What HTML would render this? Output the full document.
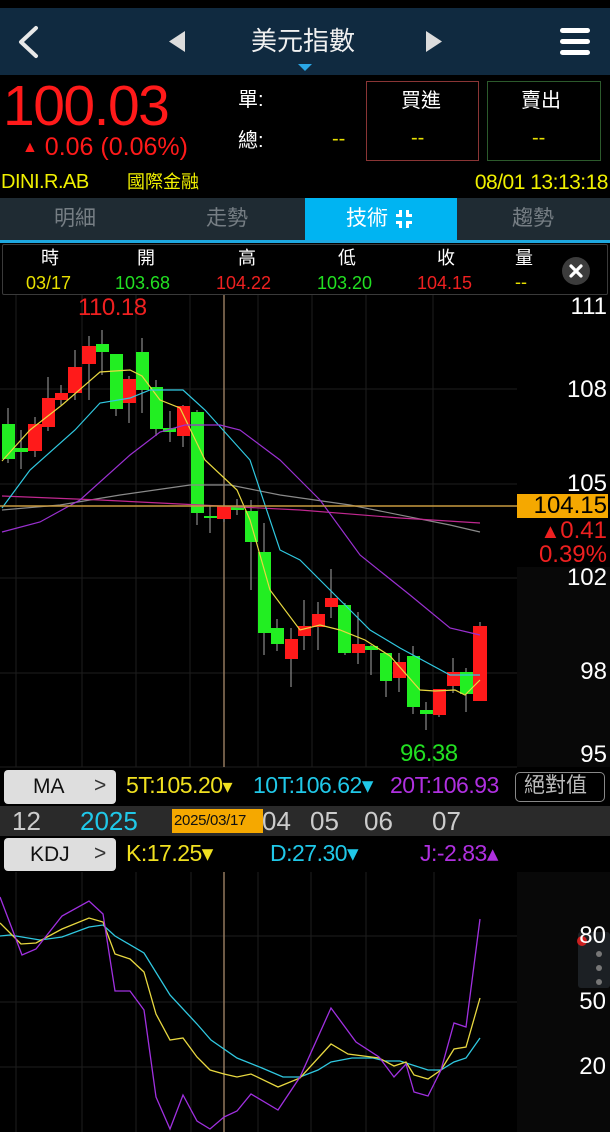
<!DOCTYPE html>
<html><head><meta charset="utf-8">
<style>
html,body{margin:0;padding:0;background:#000;}
body{width:610px;height:1132px;position:relative;overflow:hidden;font-family:"Liberation Sans","Noto Sans CJK TC",sans-serif;}
.a{position:absolute;white-space:nowrap;line-height:1;}
</style></head><body>
<!-- nav -->
<div class="a" style="left:0;top:8px;width:610px;height:67px;background:#102a40;"></div>
<svg class="a" style="left:0;top:0" width="610" height="80">
<polyline points="36,28 21,42 36,56" fill="none" stroke="#e8e8e8" stroke-width="4" stroke-linecap="round" stroke-linejoin="round"/>
<polygon points="185,31 185,52 169,41.5" fill="#dcdcdc"/>
<polygon points="426,31 426,52 442,41.5" fill="#dcdcdc"/>
<rect x="560" y="28" width="30" height="5" rx="2.5" fill="#fff"/>
<rect x="560" y="39" width="30" height="5" rx="2.5" fill="#fff"/>
<rect x="560" y="50" width="30" height="5" rx="2.5" fill="#fff"/>
<polygon points="298,64 312,64 305,71" fill="#2aa8e8"/>
</svg>
<div class="a" style="left:251px;top:28px;font-size:26px;color:#f0f0f0;">美元指數</div>
<!-- quote -->
<div class="a" style="left:3px;top:78px;font-size:57px;color:#ff1a1a;letter-spacing:-1.5px;">100.03</div>
<div class="a" style="left:22px;top:135px;font-size:25px;color:#ff1a1a;"><span style="font-size:16px;vertical-align:3px">▲</span> 0.06 (0.06%)</div>
<div class="a" style="left:238px;top:90px;font-size:20px;color:#fff;">單:</div>
<div class="a" style="left:238px;top:131px;font-size:20px;color:#fff;">總:</div>
<div class="a" style="left:332px;top:129px;font-size:20px;color:#e8e000;">--</div>
<div class="a" style="left:366px;top:81px;width:111px;height:78px;border:1px solid #8a3535;"></div>
<div class="a" style="left:487px;top:81px;width:112px;height:78px;border:1px solid #2c5a2c;"></div>
<div class="a" style="left:401px;top:91px;font-size:20px;color:#fff;">買進</div>
<div class="a" style="left:521px;top:91px;font-size:20px;color:#fff;">賣出</div>
<div class="a" style="left:411px;top:128px;font-size:20px;color:#e8e000;">--</div>
<div class="a" style="left:532px;top:128px;font-size:20px;color:#e8e000;">--</div>
<div class="a" style="left:1px;top:172px;font-size:20px;color:#f0f000;letter-spacing:-0.5px;">DINI.R.AB</div>
<div class="a" style="left:127px;top:173px;font-size:18px;color:#f0f000;">國際金融</div>
<div class="a" style="right:2px;top:172px;font-size:21px;color:#f0f000;letter-spacing:-0.5px;">08/01 13:13:18</div>
<!-- tabs -->
<div class="a" style="left:0;top:198px;width:610px;height:42px;background:#1f2b33;"></div>
<div class="a" style="left:305px;top:198px;width:152px;height:42px;background:#00b4f2;"></div>
<div class="a" style="left:0;top:240px;width:610px;height:3px;background:#1ea8e0;"></div>
<div class="a" style="left:54px;top:208px;font-size:21px;color:#767e84;">明細</div>
<div class="a" style="left:206px;top:208px;font-size:21px;color:#767e84;">走勢</div>
<div class="a" style="left:346px;top:208px;font-size:21px;color:#fff;">技術</div>
<svg class="a" style="left:395px;top:210px" width="20" height="20"><g fill="#fff"><rect x="1" y="4" width="6" height="3"/><rect x="4" y="0" width="3" height="7"/><rect x="11" y="4" width="6" height="3"/><rect x="11" y="0" width="3" height="7"/><rect x="1" y="11" width="6" height="3"/><rect x="4" y="11" width="3" height="7"/><rect x="11" y="11" width="6" height="3"/><rect x="11" y="11" width="3" height="7"/></g></svg>
<div class="a" style="left:512px;top:208px;font-size:21px;color:#767e84;">趨勢</div>
<!-- ohlc header -->
<div class="a" style="left:2px;top:244px;width:604px;height:49px;border:1px solid #3a3a3a;border-radius:2px;"></div>
<div class="a" style="left:41px;top:249px;font-size:18px;color:#fff;">時</div>
<div class="a" style="left:137px;top:249px;font-size:18px;color:#fff;">開</div>
<div class="a" style="left:238px;top:249px;font-size:18px;color:#fff;">高</div>
<div class="a" style="left:338px;top:249px;font-size:18px;color:#fff;">低</div>
<div class="a" style="left:437px;top:249px;font-size:18px;color:#fff;">收</div>
<div class="a" style="left:515px;top:249px;font-size:18px;color:#fff;">量</div>
<div class="a" style="left:26px;top:274px;font-size:18px;color:#e8e000;">03/17</div>
<div class="a" style="left:115px;top:274px;font-size:18px;color:#22e022;">103.68</div>
<div class="a" style="left:216px;top:274px;font-size:18px;color:#ee2020;">104.22</div>
<div class="a" style="left:317px;top:274px;font-size:18px;color:#22e022;">103.20</div>
<div class="a" style="left:417px;top:274px;font-size:18px;color:#ee2020;">104.15</div>
<div class="a" style="left:515px;top:273px;font-size:18px;color:#e8e000;">--</div>
<svg class="a" style="left:560px;top:255px" width="32" height="32"><circle cx="16" cy="16" r="14" fill="#3c3c3c"/><path d="M11,11 L21,21 M21,11 L11,21" stroke="#fff" stroke-width="3.2" stroke-linecap="round"/></svg>

<!-- chart svg -->
<svg class="a" style="left:0;top:0" width="610" height="1132" viewBox="0 0 610 1132">
<rect x="517" y="567" width="93" height="200" fill="#080808"/>
<rect x="517" y="872" width="93" height="260" fill="#080808"/>
<g stroke="#1e1e1e" stroke-width="1">
<line x1="16" y1="295" x2="16" y2="767"/><line x1="82" y1="295" x2="82" y2="767"/><line x1="136" y1="295" x2="136" y2="767"/><line x1="190" y1="295" x2="190" y2="767"/><line x1="258" y1="295" x2="258" y2="767"/><line x1="312" y1="295" x2="312" y2="767"/><line x1="366" y1="295" x2="366" y2="767"/><line x1="433" y1="295" x2="433" y2="767"/>
<line x1="0" y1="389" x2="517" y2="389"/><line x1="0" y1="484" x2="517" y2="484"/><line x1="0" y1="578" x2="517" y2="578"/><line x1="0" y1="673" x2="517" y2="673"/>
<line x1="16" y1="872" x2="16" y2="1132"/><line x1="82" y1="872" x2="82" y2="1132"/><line x1="136" y1="872" x2="136" y2="1132"/><line x1="191" y1="872" x2="191" y2="1132"/><line x1="258" y1="872" x2="258" y2="1132"/><line x1="311" y1="872" x2="311" y2="1132"/><line x1="366" y1="872" x2="366" y2="1132"/><line x1="434" y1="872" x2="434" y2="1132"/>
<line x1="0" y1="936" x2="517" y2="936"/><line x1="0" y1="1002" x2="517" y2="1002"/><line x1="0" y1="1067" x2="517" y2="1067"/>
<line x1="0" y1="767" x2="517" y2="767"/>
</g>
<line x1="224" y1="295" x2="224" y2="767" stroke="#a88a6c" stroke-width="1.3"/>
<line x1="224" y1="872" x2="224" y2="1132" stroke="#a88a6c" stroke-width="1.3"/>
<!-- wicks -->
<g stroke="#8a8a8a" stroke-width="1.2">
<line x1="8" y1="408" x2="8" y2="463"/><line x1="21" y1="430" x2="21" y2="469"/><line x1="35" y1="417" x2="35" y2="457"/><line x1="48" y1="377" x2="48" y2="431"/><line x1="61" y1="385" x2="61" y2="405"/><line x1="75" y1="350" x2="75" y2="400"/><line x1="89" y1="336" x2="89" y2="400"/><line x1="102" y1="330" x2="102" y2="375"/><line x1="116" y1="354" x2="116" y2="416"/><line x1="129" y1="376" x2="129" y2="423"/><line x1="142" y1="338" x2="142" y2="413"/><line x1="156" y1="380" x2="156" y2="436"/><line x1="170" y1="411" x2="170" y2="442"/><line x1="183" y1="405" x2="183" y2="447"/><line x1="197" y1="410" x2="197" y2="525"/><line x1="210" y1="506" x2="210" y2="533"/><line x1="224" y1="504" x2="224" y2="522"/><line x1="237" y1="499" x2="237" y2="515"/><line x1="251" y1="500" x2="251" y2="590"/><line x1="264" y1="523" x2="264" y2="655"/><line x1="277" y1="619" x2="277" y2="651"/><line x1="291" y1="628" x2="291" y2="687"/><line x1="304" y1="600" x2="304" y2="650"/><line x1="318" y1="602" x2="318" y2="650"/><line x1="331" y1="569" x2="331" y2="618"/><line x1="345" y1="603" x2="345" y2="655"/><line x1="358" y1="612" x2="358" y2="664"/><line x1="371" y1="645" x2="371" y2="675"/><line x1="386" y1="653" x2="386" y2="697"/><line x1="399" y1="653" x2="399" y2="692"/><line x1="413" y1="646" x2="413" y2="714"/><line x1="426" y1="702" x2="426" y2="730"/><line x1="439" y1="689" x2="439" y2="717"/><line x1="453" y1="658" x2="453" y2="693"/><line x1="466" y1="668" x2="466" y2="712"/><line x1="480" y1="622" x2="480" y2="701"/>
</g>
<g fill="#22ee22">
<rect x="2" y="424" width="13" height="35"/><rect x="15" y="448" width="13" height="4"/><rect x="96" y="344" width="13" height="8"/><rect x="110" y="354" width="13" height="55"/><rect x="136" y="352" width="13" height="38"/><rect x="150" y="387" width="13" height="42"/><rect x="163" y="428" width="13" height="4"/><rect x="191" y="412" width="13" height="101"/><rect x="204" y="516" width="13" height="2"/><rect x="231" y="507" width="13" height="3"/><rect x="245" y="511" width="13" height="31"/><rect x="258" y="552" width="13" height="81"/><rect x="271" y="628" width="13" height="16"/><rect x="338" y="605" width="13" height="48"/><rect x="365" y="646" width="13" height="4"/><rect x="380" y="653" width="12" height="28"/><rect x="407" y="656" width="13" height="51"/><rect x="420" y="710" width="13" height="4"/><rect x="460" y="672" width="13" height="22"/>
</g>
<g fill="#ff1a1a">
<rect x="28" y="424" width="14" height="27"/><rect x="42" y="398" width="13" height="29"/><rect x="55" y="393" width="13" height="7"/><rect x="68" y="367" width="14" height="26"/><rect x="82" y="346" width="14" height="18"/><rect x="123" y="379" width="13" height="24"/><rect x="177" y="406" width="13" height="30"/><rect x="217" y="506" width="14" height="13"/><rect x="285" y="639" width="13" height="20"/><rect x="298" y="626" width="13" height="10"/><rect x="312" y="614" width="13" height="13"/><rect x="325" y="598" width="13" height="9"/><rect x="352" y="644" width="13" height="9"/><rect x="393" y="662" width="13" height="16"/><rect x="433" y="689" width="13" height="26"/><rect x="447" y="672" width="13" height="14"/><rect x="473" y="626" width="14" height="75"/>
</g>
<g fill="none" stroke-width="1.2">
<polyline stroke="#8a8a8a" points="2,510 60,505 120,495 190,485 230,485 280,495 350,505 450,525 480,532"/>
<polyline stroke="#c02890" points="2,496 100,500 200,505 300,510 400,518 480,523"/>
<polyline stroke="#e8d840" points="2,461 30,430 62,405 100,372 130,370 142,376 160,400 180,408 205,460 237,490 250,520 270,590 300,630 320,625 340,630 365,640 390,656 420,690 435,691 455,690 465,695 480,680"/>
<polyline stroke="#30c8e0" points="2,508 30,470 75,430 100,403 130,398 150,390 183,390 205,410 250,460 280,550 300,560 320,580 340,600 370,630 400,648 450,675 480,675"/>
<polyline stroke="#9a30d0" points="2,532 40,522 80,500 130,455 160,432 185,425 220,425 240,430 280,460 300,480 320,500 360,555 410,595 450,628 480,635"/>
</g>
<line x1="0" y1="506" x2="517" y2="506" stroke="#c89a40" stroke-width="1.5"/>
<rect x="517" y="494" width="91" height="24" fill="#f5a800"/>
<!-- KDJ lines -->
<g fill="none" stroke-width="1.3">
<polyline stroke="#30c8e0" points="0,936 10,935 40,940 62,937 89,927 103,925 115,936 144,953 170,995 197,1024 211,1040 237,1058 262,1068 283,1077 300,1077 318,1070 331,1062 352,1058 373,1058 385,1061 400,1061 428,1070 441,1070 454,1062 466,1058 480,1038"/>
<polyline stroke="#e8d840" points="0,923 21,944 36,943 62,929 89,918 103,922 115,954 130,959 144,972 156,1014 170,1040 183,1038 197,1057 210,1070 224,1074 237,1077 251,1074 278,1087 300,1078 331,1044 348,1054 379,1058 394,1066 406,1062 414,1075 428,1079 441,1070 454,1049 466,1047 480,998"/>
<polyline stroke="#a030e0" points="0,897 22,955 36,949 62,916 89,901 103,914 115,991 130,991 144,1010 156,1097 170,1129 183,1095 197,1121 210,1129 224,1117 237,1111 251,1094 278,1110 300,1077 331,1008 356,1042 379,1057 394,1077 406,1064 414,1092 428,1096 441,1070 454,1023 466,1027 480,919"/>
</g>
<rect x="578" y="932" width="32" height="56" rx="3" fill="#1c2024"/>
<circle cx="582" cy="941" r="5" fill="#e02020" opacity="0.9"/>
<circle cx="599" cy="954" r="3" fill="#777"/><circle cx="599" cy="968" r="3" fill="#777"/><circle cx="599" cy="982" r="3" fill="#777"/>
</svg>
<!-- chart texts -->
<div class="a" style="left:78px;top:296px;font-size:24px;color:#ee2020;letter-spacing:-0.5px;">110.18</div>
<div class="a" style="left:400px;top:742px;font-size:24px;color:#22e022;letter-spacing:-0.5px;">96.38</div>
<div class="a" style="right:3px;top:295px;font-size:24px;color:#fff;">111</div>
<div class="a" style="right:3px;top:378px;font-size:24px;color:#fff;">108</div>
<div class="a" style="right:3px;top:472px;font-size:24px;color:#fff;">105</div>
<div class="a" style="right:3px;top:494px;font-size:24px;color:#000;">104.15</div>
<div class="a" style="right:3px;top:519px;font-size:24px;color:#ee2020;"><span style="font-size:20px">▲</span>0.41</div>
<div class="a" style="right:3px;top:543px;font-size:24px;color:#ee2020;">0.39%</div>
<div class="a" style="right:3px;top:566px;font-size:24px;color:#fff;">102</div>
<div class="a" style="right:3px;top:660px;font-size:24px;color:#fff;">98</div>
<div class="a" style="right:3px;top:743px;font-size:24px;color:#fff;">95</div>
<div class="a" style="right:4px;top:924px;font-size:24px;color:#fff;">80</div>
<div class="a" style="right:4px;top:990px;font-size:24px;color:#fff;">50</div>
<div class="a" style="right:4px;top:1055px;font-size:24px;color:#fff;">20</div>
<!-- MA row -->
<div class="a" style="left:4px;top:770px;width:112px;height:34px;background:#dedede;border-radius:4px;"></div>
<div class="a" style="left:33px;top:776px;font-size:21px;color:#111;">MA</div>
<div class="a" style="left:94px;top:775px;font-size:21px;color:#333;">&gt;</div>
<div class="a" style="left:126px;top:774px;font-size:23px;color:#f0e020;letter-spacing:-0.5px;">5T:105.20<span style="font-size:20px">▾</span></div>
<div class="a" style="left:253px;top:774px;font-size:23px;color:#20c8e8;letter-spacing:-0.5px;">10T:106.62▾</div>
<div class="a" style="left:390px;top:774px;font-size:23px;color:#b030e0;letter-spacing:-0.5px;">20T:106.93</div>
<div class="a" style="left:515px;top:772px;width:88px;height:28px;border:1.5px solid #888;border-radius:5px;"></div>
<div class="a" style="left:524px;top:775px;font-size:21px;color:#bbb;">絕對值</div>
<!-- date axis -->
<div class="a" style="left:0;top:806px;width:610px;height:30px;background:#2a2a2a;"></div>
<div class="a" style="left:12px;top:808px;font-size:26px;color:#ccc;">12</div>
<div class="a" style="left:80px;top:808px;font-size:26px;color:#20c8e8;">2025</div>
<div class="a" style="left:172px;top:809px;width:91px;height:24px;background:#f5a800;"></div>
<div class="a" style="left:174px;top:813px;font-size:15px;color:#111;letter-spacing:-0.3px;">2025/03/17</div>
<div class="a" style="left:262px;top:808px;font-size:26px;color:#ccc;">04</div>
<div class="a" style="left:310px;top:808px;font-size:26px;color:#ccc;">05</div>
<div class="a" style="left:364px;top:808px;font-size:26px;color:#ccc;">06</div>
<div class="a" style="left:432px;top:808px;font-size:26px;color:#ccc;">07</div>
<!-- KDJ row -->
<div class="a" style="left:4px;top:838px;width:112px;height:33px;background:#dedede;border-radius:4px;"></div>
<div class="a" style="left:30px;top:844px;font-size:21px;color:#111;">KDJ</div>
<div class="a" style="left:94px;top:843px;font-size:21px;color:#333;">&gt;</div>
<div class="a" style="left:126px;top:842px;font-size:23px;color:#f0e020;letter-spacing:-0.5px;">K:17.25▾</div>
<div class="a" style="left:270px;top:842px;font-size:23px;color:#20c8e8;letter-spacing:-0.5px;">D:27.30▾</div>
<div class="a" style="left:420px;top:842px;font-size:23px;color:#b030e0;letter-spacing:-0.5px;">J:-2.83▴</div>
</body></html>
